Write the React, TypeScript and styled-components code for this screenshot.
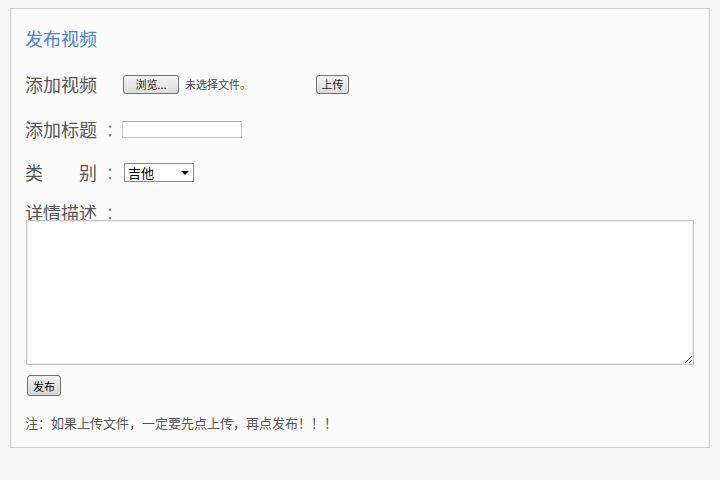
import styled, { createGlobalStyle } from "styled-components";

const GlobalStyle = createGlobalStyle`
  html, body {
    margin: 0;
    padding: 0;
    background: #f6f6f6;
  }
  body {
    font-family: "Noto Sans CJK SC", "Noto Sans", sans-serif;
  }
`;

function PublishVideo() {
  return (
    <Panel>
      <Title>发布视频</Title>

      <Row $top={16}>
        <Label>
          <LabelText>添加视频</LabelText>
        </Label>
        <FileField>
          <SmallButton $width={56}>浏览...</SmallButton>
          <FileName>未选择文件。</FileName>
        </FileField>
        <SmallButton $width={33}>上传</SmallButton>
      </Row>

      <Row $top={15}>
        <Label>
          <LabelText>添加标题</LabelText>
          <Colon>：</Colon>
        </Label>
        <TitleInput type="text" />
      </Row>

      <Row $top={13}>
        <Label>
          <LabelText $spread>
            <span>类</span>
            <span>别</span>
          </LabelText>
          <Colon>：</Colon>
        </Label>
        <SelectBox>
          <Select defaultValue="吉他">
            <option>吉他</option>
            <option>钢琴</option>
            <option>鼓</option>
          </Select>
          <Arrow />
        </SelectBox>
      </Row>

      <DescLabel>
        <LabelText>详情描述</LabelText>
        <Colon>：</Colon>
      </DescLabel>
      <Description />

      <PublishButton>发布</PublishButton>

      <Note>注：如果上传文件，一定要先点上传，再点发布！！！</Note>
    </Panel>
  );
}

export default function App() {
  return (
    <>
      <GlobalStyle />
      <PublishVideo />
    </>
  );
}

const Panel = styled.div`
  box-sizing: border-box;
  width: 700px;
  height: 440px;
  margin: 8px 10px 0;
  padding: 14px 15px 0 14px;
  background: #fbfbfb;
  border: 1px solid #cccccc;
  display: flex;
  flex-direction: column;
  align-items: flex-start;
`;

const Title = styled.h2`
  margin: 0;
  font-size: 18px;
  line-height: 30px;
  font-weight: 400;
  color: #4a80e2;
`;

const Row = styled.div<{ $top: number }>`
  display: flex;
  align-items: center;
  height: 30px;
  margin-top: ${(p) => p.$top}px;
`;

const Label = styled.div`
  width: 97px;
  display: flex;
  align-items: center;
  font-size: 18px;
  color: #555555;
  line-height: 30px;
`;

const LabelText = styled.span<{ $spread?: boolean }>`
  width: 72px;
  display: flex;
  justify-content: ${(p) => (p.$spread ? "space-between" : "flex-start")};
  white-space: nowrap;
`;

const Colon = styled.span`
  margin-left: 9px;
  font-size: 16px;
  color: #777777;
`;

const FileField = styled.div`
  width: 193px;
  display: flex;
  align-items: center;
  margin-left: 1px;
`;

const SmallButton = styled.button<{ $width: number }>`
  box-sizing: border-box;
  width: ${(p) => p.$width}px;
  height: 19px;
  padding: 0;
  font-family: "Noto Sans CJK SC", sans-serif;
  font-size: 11px;
  line-height: 17px;
  color: #222222;
  background: linear-gradient(#f4f4f4, #dcdcdc);
  border: 1px solid #707070;
  border-radius: 3px;
`;

const FileName = styled.span`
  margin-left: 6px;
  font-size: 11px;
  color: #444444;
`;

const TitleInput = styled.input`
  box-sizing: border-box;
  width: 120px;
  height: 17px;
  margin: 0;
  padding: 0 2px;
  background: #ffffff;
  border: 1px solid #c8c8c8;
  border-top-color: #a9a9a9;
`;

const SelectBox = styled.div`
  position: relative;
  margin-left: 2px;
  width: 70px;
  height: 19px;
`;

const Select = styled.select`
  display: block;
  box-sizing: border-box;
  appearance: none;
  width: 100%;
  height: 100%;
  margin: 0;
  padding: 0 0 0 3px;
  font-family: "Noto Sans CJK SC", sans-serif;
  font-size: 13px;
  line-height: 17px;
  color: #000000;
  background: #ffffff;
  border: 1px solid #8a8a8a;
  border-radius: 0;
`;

const Arrow = styled.span`
  position: absolute;
  right: 5px;
  top: 8px;
  width: 0;
  height: 0;
  border-left: 4px solid transparent;
  border-right: 4px solid transparent;
  border-top: 4px solid #000000;
  pointer-events: none;
`;

const DescLabel = styled.div`
  display: flex;
  align-items: center;
  margin-top: 17px;
  font-size: 18px;
  line-height: 16px;
  color: #555555;
`;

const Description = styled.textarea`
  box-sizing: border-box;
  width: 668px;
  height: 145px;
  margin: 0 0 0 1px;
  background: #ffffff;
  border: 1px solid #c4c4c4;
  box-shadow: inset 0 0 0 1px #eeeeee;
`;

const PublishButton = styled.button`
  box-sizing: border-box;
  width: 34px;
  height: 21px;
  margin: 10px 0 0 2px;
  padding: 0;
  font-family: "Noto Sans CJK SC", sans-serif;
  font-size: 11px;
  color: #000000;
  background: linear-gradient(#f2f2f2, #d6d6d6);
  border: 1px solid #707070;
  border-radius: 3px;
`;

const Note = styled.p`
  margin: 18px 0 0;
  font-size: 13px;
  line-height: 18px;
  color: #555555;
`;
